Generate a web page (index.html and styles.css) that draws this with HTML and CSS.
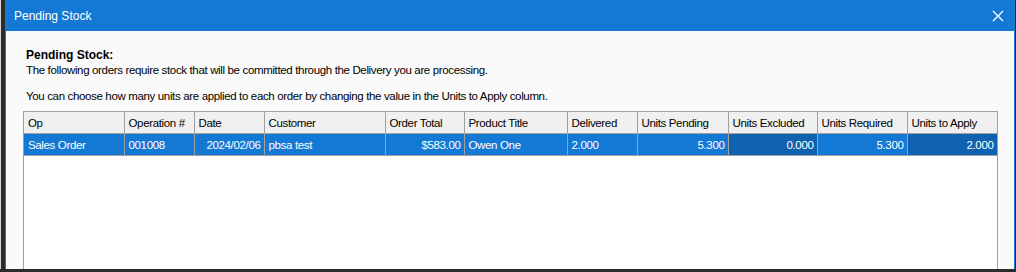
FILE: index.html
```
<!doctype html>
<html lang="en">
  <head>
    <meta charset="utf-8">
    <title>Pending Stock</title>
    <link rel="stylesheet" href="styles.css">
  </head>
  <body>
    <div class="screen">
      <div class="desk-edge"></div>
      <div class="window">
        <div class="titlebar">
          <span class="title">Pending Stock</span>
          <svg class="close" width="12" height="12" viewBox="0 0 12 12">
            <path d="M1 1 L11 11 M11 1 L1 11" stroke="#fff" stroke-width="1.2" fill="none"/>
          </svg>
        </div>
        <div class="content">
          <div class="intro">
            <div class="heading">Pending Stock:</div>
            <div>The following orders require stock that will be committed through the Delivery you are processing.</div>
            <div class="note">You can choose how many units are applied to each order by changing the value in the Units to Apply column.</div>
          </div>
          <div class="grid">
            <table>
              <colgroup>
                <col style="width:100px">
                <col style="width:70px">
                <col style="width:70px">
                <col style="width:121px">
                <col style="width:79px">
                <col style="width:103px">
                <col style="width:70px">
                <col style="width:91px">
                <col style="width:89px">
                <col style="width:90px">
                <col style="width:90px">
              </colgroup>
              <tr class="head">
                <th>Op</th>
                <th>Operation #</th>
                <th>Date</th>
                <th>Customer</th>
                <th>Order Total</th>
                <th>Product Title</th>
                <th>Delivered</th>
                <th>Units Pending</th>
                <th>Units Excluded</th>
                <th>Units Required</th>
                <th>Units to Apply</th>
              </tr>
              <tr class="selected">
                <td>Sales Order</td>
                <td>001008</td>
                <td class="num">2024/02/06</td>
                <td>pbsa test</td>
                <td class="num">$583.00</td>
                <td>Owen One</td>
                <td>2.000</td>
                <td class="num">5.300</td>
                <td class="num edit">0.000</td>
                <td class="num">5.300</td>
                <td class="num edit">2.000</td>
              </tr>
            </table>
          </div>
        </div>
      </div>
    </div>
  </body>
</html>
```
FILE: styles.css
```
body {
     margin: 0;
     background-color: #2b2b2b;
     font-family: "Liberation Sans", Arial, sans-serif;
     font-size: 11.5px;
     letter-spacing: -0.35px;
     color: #000;
}
.screen {
     display: flex;
     height: 269px;
}
.desk-edge {
     width: 5px;
     border-left: 1px solid #d8d8d8;
     box-sizing: border-box;
     background-color: #2b2b2b;
}
.window {
     width: 1010px;
     display: flex;
     flex-direction: column;
     border-left: 1px solid #1979d3;
     border-right: 1px solid #1979d3;
     box-sizing: border-box;
     background-color: #fafafa;
}
.titlebar {
     height: 31px;
     display: flex;
     align-items: center;
     justify-content: space-between;
     padding: 0 10px 0 8px;
     background-color: #1479d4;
     color: #fff;
}
.title {
     font-size: 12px;
     letter-spacing: 0;
     margin-top: 1px;
}
.close {
     margin-top: 1px;
}
.content {
     flex: 1;
     display: flex;
     flex-direction: column;
     padding: 17px 16px 0 17px;
}
.intro {
     padding-left: 3px;
     line-height: 15px;
     height: 63px;
}
.heading {
     font-weight: bold;
     font-size: 12px;
     letter-spacing: 0;
}
.note {
     margin-top: 11px;
}
.grid {
     flex: 1;
     background-color: #fff;
     border: 1px solid #a0a0a0;
     border-bottom: none;
}
table {
     border-collapse: collapse;
     table-layout: fixed;
     width: 973px;
}
th, td {
     height: 21px;
     padding: 0 3px 0 4px;
     border-right: 1px solid #a0a0a0;
     border-bottom: 1px solid #a0a0a0;
     white-space: nowrap;
     overflow: hidden;
     text-align: left;
     font-weight: normal;
}
.head th {
     background-color: #f0f0f0;
     color: #000;
}
.selected td {
     background-color: #1479d4;
     color: #fff;
}
.selected td.edit {
     background-color: #0f62b0;
}
.num {
     text-align: right;
}
```
